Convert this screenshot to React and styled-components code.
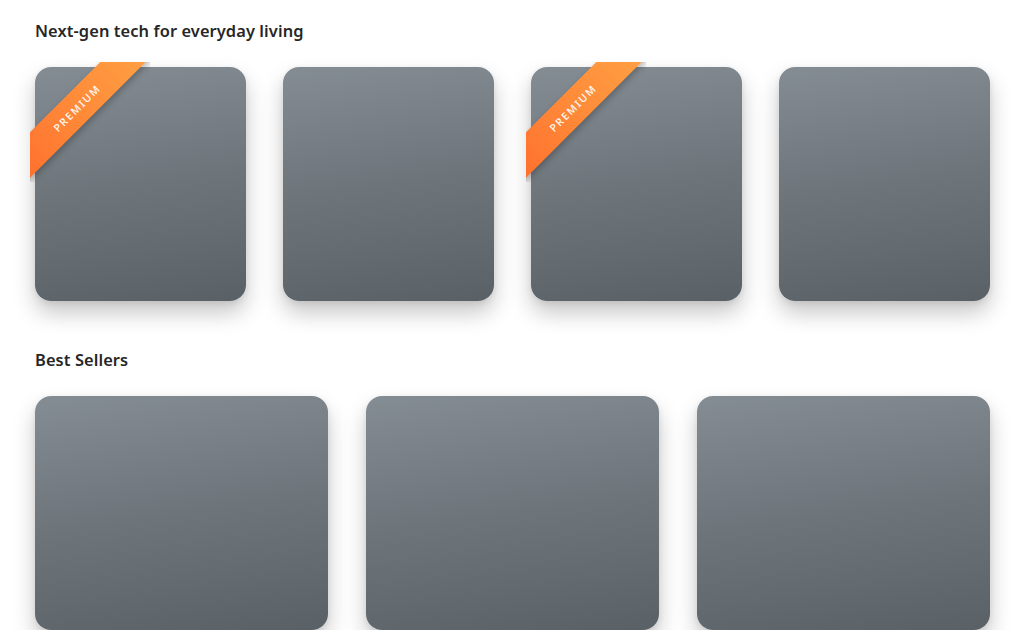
import React from "react";
import styled, { createGlobalStyle } from "styled-components";

const Global = createGlobalStyle`
  html, body { margin: 0; padding: 0; background: #ffffff; }
  body { font-family: "Noto Sans", "Open Sans", sans-serif; overflow: hidden; }
`;

const Page = styled.main`
  padding: 20px 34px 0 35px;
  display: flex;
  flex-direction: column;
  gap: 48px;
`;

const Section = styled.section`
  display: flex;
  flex-direction: column;
  gap: 25px;
`;

const Title = styled.h2`
  margin: 0;
  font-size: 16.4px;
  line-height: 22px;
  font-weight: 600;
  color: #262626;
  letter-spacing: 0.1px;
`;

const Grid = styled.div`
  display: grid;
  grid-template-columns: repeat(${(p) => p.$cols}, 1fr);
  column-gap: ${(p) => p.$gap}px;
`;

const Card = styled.div`
  position: relative;
  height: 234px;
  border-radius: 16px;
  background: linear-gradient(172deg, #858d94 0%, #6d757b 50%, #5a6166 100%);
  box-shadow: 0 12px 22px rgba(0, 0, 0, 0.22), 0 2px 6px rgba(0, 0, 0, 0.08);
`;

const RibbonClip = styled.div`
  position: absolute;
  top: -5px;
  left: -5px;
  width: 120px;
  height: 120px;
  overflow: hidden;
  pointer-events: none;
`;

const Band = styled.div`
  position: absolute;
  left: -43px;
  top: 30px;
  width: 180px;
  height: 32px;
  transform: rotate(-45deg);
  background: linear-gradient(90deg, #ff6f2e 0%, #ff8a38 50%, #ffa144 100%);
  box-shadow: 0 3px 6px rgba(0, 0, 0, 0.25);
  display: flex;
  align-items: center;
  justify-content: center;
  color: rgba(255, 255, 255, 0.9);
  font-size: 10.5px;
  font-weight: 600;
  letter-spacing: 1.6px;
`;

const Ribbon = ({ label }) => (
  <RibbonClip>
    <Band>{label}</Band>
  </RibbonClip>
);

const featured = [true, false, true, false];

export default function App() {
  return (
    <>
      <Global />
      <Page>
        <Section>
          <Title>Next-gen tech for everyday living</Title>
          <Grid $cols={4} $gap={37}>
            {featured.map((premium, i) => (
              <Card key={i}>{premium && <Ribbon label="PREMIUM" />}</Card>
            ))}
          </Grid>
        </Section>
        <Section>
          <Title>Best Sellers</Title>
          <Grid $cols={3} $gap={38}>
            {[0, 1, 2].map((i) => (
              <Card key={i} />
            ))}
          </Grid>
        </Section>
      </Page>
    </>
  );
}
